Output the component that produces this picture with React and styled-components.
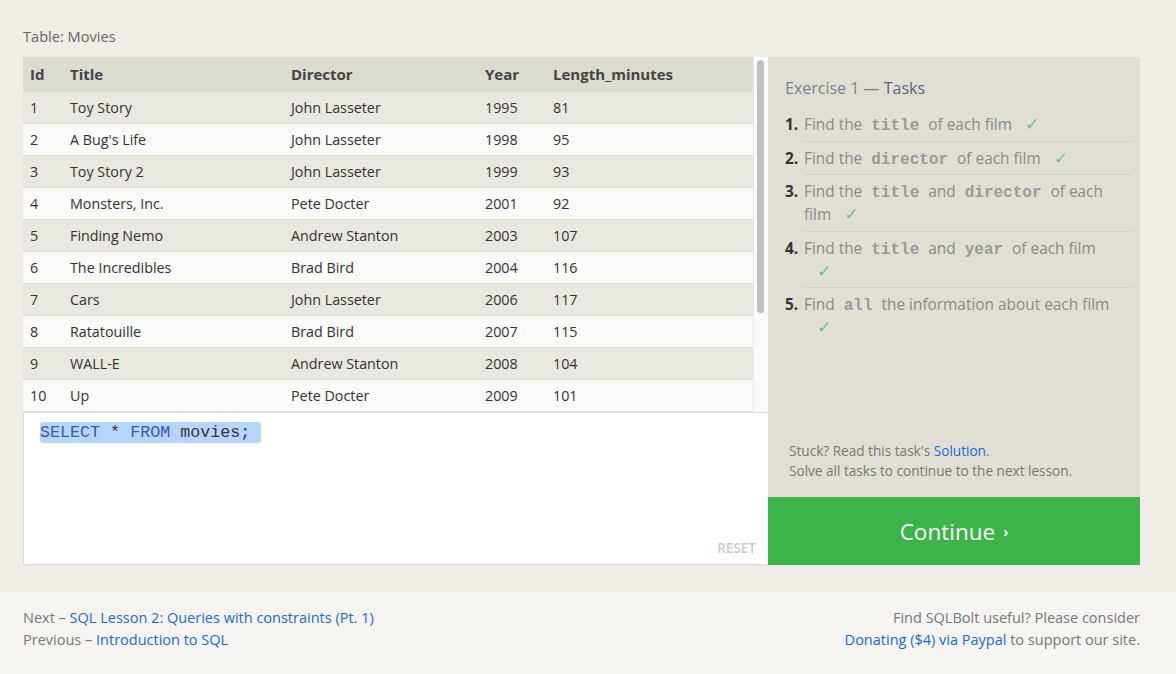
import React from "react";
import styled, { createGlobalStyle } from "styled-components";

const Global = createGlobalStyle`
  html, body { margin: 0; padding: 0; }
  body {
    font-family: "Open Sans", "DejaVu Sans", sans-serif;
    background: #f5f4f0;
    color: #333;
  }
`;

const movies = [
  [1, "Toy Story", "John Lasseter", 1995, 81],
  [2, "A Bug's Life", "John Lasseter", 1998, 95],
  [3, "Toy Story 2", "John Lasseter", 1999, 93],
  [4, "Monsters, Inc.", "Pete Docter", 2001, 92],
  [5, "Finding Nemo", "Andrew Stanton", 2003, 107],
  [6, "The Incredibles", "Brad Bird", 2004, 116],
  [7, "Cars", "John Lasseter", 2006, 117],
  [8, "Ratatouille", "Brad Bird", 2007, 115],
  [9, "WALL-E", "Andrew Stanton", 2008, 104],
  [10, "Up", "Pete Docter", 2009, 101],
  [11, "Toy Story 3", "Lee Unkrich", 2010, 103],
  [12, "Cars 2", "John Lasseter", 2011, 120],
  [13, "Brave", "Brenda Chapman", 2012, 102],
  [14, "Monsters University", "Dan Scanlon", 2013, 110],
];

const Shell = styled.div`
  display: flex;
  min-height: 674px;
`;

const PageCol = styled.div`
  flex: 1;
  display: flex;
  flex-direction: column;
`;

const Gutter = styled.div`
  width: 9px;
  background: #e5e2de;
`;

const Lesson = styled.section`
  background: #f0ede6;
  padding: 26px 36px 27px 23px;
  height: 592px;
  box-sizing: border-box;
`;

const Caption = styled.div`
  font-size: 14.6px;
  line-height: 20px;
  color: #666;
  margin-bottom: 11px;
`;

const Widget = styled.div`
  display: grid;
  grid-template-columns: 745px 372px;
  grid-template-rows: 440px 68px;
`;

const LeftCol = styled.div`
  grid-row: 1 / span 2;
  display: flex;
  flex-direction: column;
`;

const TableFrame = styled.div`
  height: 355px;
  display: flex;
  background: #f9f9f7;
`;

const TableClip = styled.div`
  flex: 1;
  overflow: hidden;
`;

const ScrollTrack = styled.div`
  width: 15px;
  flex: none;
  background: #fafafa;
  border-left: 1px solid #ececec;
  padding: 3px 4px 0 3px;
  box-sizing: border-box;
`;

const ScrollThumb = styled.div`
  height: 253px;
  background: #c1c1c1;
  border-radius: 5px;
`;

const Table = styled.table`
  width: 100%;
  border-collapse: collapse;
  table-layout: fixed;
  font-size: 14.3px;
`;

const Th = styled.th`
  text-align: left;
  font-weight: 700;
  font-size: 15px;
  color: #444;
  background: #dcdbcf;
  height: 34px;
  padding: 0 0 0 7px;
`;

const Row = styled.tr`
  background: ${(p) => (p.$odd ? "#e9e8e0" : "#f9f9f7")};
  border-top: 1px solid #dedcd3;
`;

const Td = styled.td`
  height: 31px;
  padding: 0 0 0 7px;
  color: #333;
  white-space: nowrap;
`;

const Editor = styled.div`
  position: relative;
  flex: 1;
  background: #fff;
  border: 1px solid #dddcd6;
  border-right: none;
  padding: 10px 16px 9px;
`;

const Code = styled.div`
  font-family: "Liberation Mono", "Courier New", monospace;
  font-size: 16.7px;
  line-height: 20px;
`;

const Selection = styled.span`
  background: #b5d5ff;
  border-radius: 3px;
  padding: 1px 11px 1px 0;
`;

const Kw = styled.span`
  color: #3a5aa8;
`;

const Reset = styled.span`
  position: absolute;
  right: 12px;
  bottom: 7px;
  font-size: 13.5px;
  font-weight: 600;
  color: #c9c9c9;
`;

const Tasks = styled.div`
  background: #e1dfd4;
  padding: 20px 8px 16px 17px;
  display: flex;
  flex-direction: column;
`;

const TasksTitle = styled.h3`
  margin: 0 0 9px;
  font-size: 16px;
  line-height: 22px;
  font-weight: 400;
  color: #7b8190;
  & b { color: #5c6272; font-weight: 400; }
`;

const List = styled.ol`
  margin: 0;
  padding: 0;
  list-style: none;
  counter-reset: task;
`;

const Item = styled.li`
  counter-increment: task;
  display: flex;
  font-size: 15.4px;
  line-height: 23px;
  color: #8a8a8a;
  &::before {
    content: counter(task) ".";
    width: 19px;
    flex: none;
    color: #333;
    font-weight: 700;
    padding-top: 5px;
  }
`;

const ItemBody = styled.div`
  flex: 1;
  padding: 5px 12px 4.5px 0;
  border-bottom: ${(p) => (p.$last ? "none" : "1px solid #d4d2c7")};
`;

const Mono = styled.code`
  font-family: "Liberation Mono", "Courier New", monospace;
  font-weight: 700;
  font-size: 16px;
  line-height: 0;
  color: #999;
  padding: 0 5px;
`;

const Check = styled.span`
  color: #72c67c;
  font-size: 17px;
  line-height: 0;
  margin-left: 13px;
  display: inline-block;
`;

const Hint = styled.div`
  margin-top: auto;
  padding-left: 4px;
  font-size: 13.6px;
  line-height: 20px;
  color: #777;
`;

const Link = styled.a`
  color: #1a6bd6;
  text-decoration: none;
`;

const Continue = styled.button`
  border: none;
  background: #3bb54a;
  color: #fff;
  font-family: inherit;
  font-size: 22.5px;
  font-weight: 500;
  display: flex;
  align-items: center;
  justify-content: center;
  gap: 8px;
  padding: 0;
  & small { font-size: 14px; font-weight: 700; }
`;

const Footer = styled.footer`
  flex: 1;
  background: #f5f4f0;
  padding: 15px 36px 0 23px;
  display: flex;
  justify-content: space-between;
  font-size: 14.5px;
  line-height: 22px;
  color: #777;
`;

const Right = styled.div`
  text-align: right;
`;

const cols = [40, 221, 194, 68, null];

export default function App() {
  return (
    <Shell>
      <Global />
      <PageCol>
        <Lesson>
          <Caption>Table: Movies</Caption>
          <Widget>
            <LeftCol>
              <TableFrame>
                <TableClip>
                  <Table>
                    <colgroup>
                      {cols.map((w, i) => (
                        <col key={i} style={w ? { width: w } : undefined} />
                      ))}
                    </colgroup>
                    <thead>
                      <tr>
                        <Th>Id</Th>
                        <Th>Title</Th>
                        <Th>Director</Th>
                        <Th>Year</Th>
                        <Th>Length_minutes</Th>
                      </tr>
                    </thead>
                    <tbody>
                      {movies.map((m, i) => (
                        <Row key={m[0]} $odd={i % 2 === 0}>
                          {m.map((v, j) => (
                            <Td key={j}>{v}</Td>
                          ))}
                        </Row>
                      ))}
                    </tbody>
                  </Table>
                </TableClip>
                <ScrollTrack>
                  <ScrollThumb />
                </ScrollTrack>
              </TableFrame>
              <Editor>
                <Code>
                  <Selection>
                    <Kw>SELECT</Kw> * <Kw>FROM</Kw> movies;
                  </Selection>
                </Code>
                <Reset>RESET</Reset>
              </Editor>
            </LeftCol>
            <Tasks>
              <TasksTitle>
                Exercise 1 — <b>Tasks</b>
              </TasksTitle>
              <List>
                <Item>
                  <ItemBody>
                    Find the <Mono>title</Mono> of each film<Check>✓</Check>
                  </ItemBody>
                </Item>
                <Item>
                  <ItemBody>
                    Find the <Mono>director</Mono> of each film<Check>✓</Check>
                  </ItemBody>
                </Item>
                <Item>
                  <ItemBody>
                    Find the <Mono>title</Mono> and <Mono>director</Mono> of each film
                    <Check>✓</Check>
                  </ItemBody>
                </Item>
                <Item>
                  <ItemBody>
                    Find the <Mono>title</Mono> and <Mono>year</Mono> of each film{" "}
                    <Check>✓</Check>
                  </ItemBody>
                </Item>
                <Item>
                  <ItemBody $last>
                    Find <Mono>all</Mono> the information about each film{" "}
                    <Check>✓</Check>
                  </ItemBody>
                </Item>
              </List>
              <Hint>
                Stuck? Read this task's <Link href="#">Solution</Link>.
                <br />
                Solve all tasks to continue to the next lesson.
              </Hint>
            </Tasks>
            <Continue>
              Continue <small>›</small>
            </Continue>
          </Widget>
        </Lesson>
        <Footer>
          <div>
            Next – <Link href="#">SQL Lesson 2: Queries with constraints (Pt. 1)</Link>
            <br />
            Previous – <Link href="#">Introduction to SQL</Link>
          </div>
          <Right>
            Find SQLBolt useful? Please consider
            <br />
            <Link href="#">Donating ($4) via Paypal</Link> to support our site.
          </Right>
        </Footer>
      </PageCol>
      <Gutter />
    </Shell>
  );
}
